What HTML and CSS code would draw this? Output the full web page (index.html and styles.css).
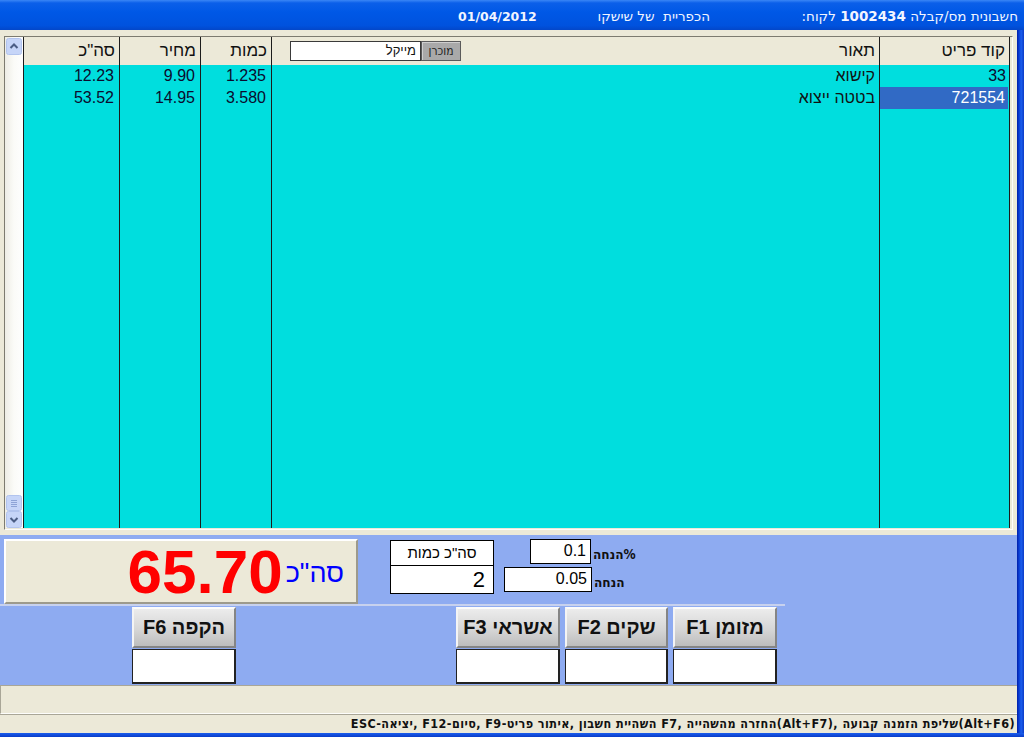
FILE: index.html
```html
<!DOCTYPE html>
<html lang="he">
<head>
<meta charset="utf-8">
<title>POS</title>
<link rel="stylesheet" href="styles.css">
</head>
<body>
<div class="app">
  <div class="titlebar">
    <span class="t-spacer"></span>
    <span class="t-date">01/04/2012</span>
    <span class="t-shop"><span dir="rtl">הכפריית&nbsp; של שישקו</span></span>
    <span class="t-doc"><span dir="rtl">חשבונית מס/קבלה <b>1002434</b> לקוח:</span></span>
  </div>
  <div class="frame">
    <div class="content">
      <div class="grid">
        <div class="scrollbar">
          <svg class="sb-btn" width="16" height="17" viewBox="0 0 16 17"><rect x="0.5" y="0.5" width="15" height="16" rx="2" fill="#c6d5f8" stroke="#b2c4ee"/><path d="M4.5 10 L8 6.5 L11.5 10" fill="none" stroke="#4b5d84" stroke-width="2"/></svg>
          <div class="sb-track"></div>
          <svg class="sb-btn" width="16" height="16" viewBox="0 0 16 16"><rect x="0.5" y="0.5" width="15" height="15" rx="2" fill="#c6d5f8" stroke="#b2c4ee"/><path d="M5 5.5 H11 M5 7.5 H11 M5 9.5 H11 M5 11.5 H11" stroke="#8ea3d6" stroke-width="1"/></svg>
          <svg class="sb-btn" width="16" height="17" viewBox="0 0 16 17"><rect x="0.5" y="0.5" width="15" height="16" rx="2" fill="#c6d5f8" stroke="#b2c4ee"/><path d="M4.5 7 L8 10.5 L11.5 7" fill="none" stroke="#4b5d84" stroke-width="2"/></svg>
        </div>
        <div class="col c1">
          <div class="hcell"><span dir="rtl">סה"כ</span></div>
          <div class="gbody">
            <div class="cell">12.23</div>
            <div class="cell">53.52</div>
          </div>
        </div>
        <div class="col c2">
          <div class="hcell"><span dir="rtl">מחיר</span></div>
          <div class="gbody">
            <div class="cell">9.90</div>
            <div class="cell">14.95</div>
          </div>
        </div>
        <div class="col c3">
          <div class="hcell"><span dir="rtl">כמות</span></div>
          <div class="gbody">
            <div class="cell">1.235</div>
            <div class="cell">3.580</div>
          </div>
        </div>
        <div class="col c4">
          <div class="hcell hcell-desc">
            <div class="seller">
              <span class="seller-input" dir="rtl">מייקל</span>
              <span class="seller-btn" dir="rtl">מוכרן</span>
            </div>
            <span dir="rtl">תאור</span>
          </div>
          <div class="gbody">
            <div class="cell heb"><span dir="rtl">קישוא</span></div>
            <div class="cell heb"><span dir="rtl">בטטה ייצוא</span></div>
          </div>
        </div>
        <div class="col c5">
          <div class="hcell"><span dir="rtl">קוד פריט</span></div>
          <div class="gbody">
            <div class="cell">33</div>
            <div class="cell selected">721554</div>
          </div>
        </div>
      </div>

      <div class="panel">
        <div class="toprow">
          <div class="totalbox">
            <span class="amount">65.70</span>
            <span class="amount-label" dir="rtl">סה"כ</span>
          </div>
          <div class="qty">
            <div class="qty-h" dir="rtl">סה"כ כמות</div>
            <div class="qty-v">2</div>
          </div>
          <div class="disc">
            <div class="drow drow1">
              <span class="dbox dbox1">0.1</span>
              <span class="dlabel" dir="rtl">%הנחה</span>
            </div>
            <div class="drow">
              <span class="dbox dbox2">0.05</span>
              <span class="dlabel" dir="rtl">הנחה</span>
            </div>
          </div>
        </div>
        <div class="sep"></div>
        <div class="btnrow">
          <div class="bcol b6">
            <div class="btn"><span dir="rtl">הקפה F6</span></div>
            <div class="bbox"></div>
          </div>
          <div class="bcol b3">
            <div class="btn"><span dir="rtl">אשראי F3</span></div>
            <div class="bbox"></div>
          </div>
          <div class="bcol b2">
            <div class="btn"><span dir="rtl">שקים F2</span></div>
            <div class="bbox"></div>
          </div>
          <div class="bcol b1">
            <div class="btn"><span dir="rtl">מזומן F1</span></div>
            <div class="bbox"></div>
          </div>
        </div>
      </div>

      <div class="status1"></div>
      <div class="status2" dir="rtl">(Alt+F6)שליפת הזמנה קבועה ,(Alt+F7)החזרה מהשהייה ,F7 השהיית חשבון ,איתור פריט-F9 ,סיום-F12 ,יציאה-ESC</div>
    </div>
    <div class="rframe"></div>
  </div>
  <div class="bframe"></div>
</div>
</body>
</html>
```

FILE: styles.css
```css
* {
  box-sizing: border-box;
  margin: 0;
  padding: 0;
}

html, body {
  width: 1024px;
  height: 737px;
  overflow: hidden;
}

body {
  background: #ece9d8;
  font-family: "Liberation Sans", Arial, sans-serif;
  color: #000;
}

.app {
  width: 1024px;
  height: 737px;
  display: flex;
  flex-direction: column;
}

/* Title bar */
.titlebar {
  height: 30px;
  flex: none;
  display: flex;
  align-items: center;
  padding-top: 2px;
  color: #f2f5ff;
  font-family: "DejaVu Sans", sans-serif;
  font-size: 13.5px;
  background: linear-gradient(#3a86f6 0, #0b5fe9 3px, #0058e6 40%, #0052de 85%, #0347c9 100%);
  white-space: nowrap;
}

.t-spacer {
  width: 458px;
  flex: none;
}

.t-date {
  width: 80px;
  flex: none;
  font-weight: bold;
  font-size: 12.5px;
}

.t-shop {
  width: 172px;
  flex: none;
  text-align: right;
}

.t-doc {
  flex: 1;
  text-align: right;
  margin-right: 6px;
}

.t-doc b {
  font-weight: bold;
}

/* Frame */
.frame {
  height: 703px;
  flex: none;
  display: flex;
}

.content {
  width: 1017px;
  flex: none;
  display: flex;
  flex-direction: column;
  padding-top: 6px;
  background: #ece9d8;
}

.rframe {
  flex: 1;
  background: linear-gradient(90deg, #001ea8 0, #0a3fd6 30%, #1a5ded 60%, #0b3cc7 100%);
}

.bframe {
  height: 4px;
  flex: none;
  background: linear-gradient(#1a5ded, #0a3cc8);
}

/* Grid */
.grid {
  margin-left: 4px;
  width: 1009px;
  height: 494px;
  flex: none;
  display: flex;
  border: 1px solid;
  border-color: #7d7b70 #fdfdfb #fdfdfb #7d7b70;
  padding-right: 2px;
  padding-bottom: 1px;
  background: #ece9d8;
}

.scrollbar {
  width: 18px;
  flex: none;
  display: flex;
  flex-direction: column;
  align-items: center;
  padding-top: 1px;
  background: linear-gradient(90deg, #eeede5, #fbfbf8 50%, #fefefe);
}

.sb-btn {
  display: block;
  flex: none;
}

.sb-track {
  flex: 1;
}

.col {
  display: flex;
  flex-direction: column;
  border-left: 1px solid #1c1c1c;
}

.c1 { width: 96px; }
.c2 { width: 81px; }
.c3 { width: 71px; }
.c4 { width: 608px; }
.c5 { width: 131px; border-right: 1px solid #1c1c1c; }

.hcell {
  height: 28px;
  flex: none;
  display: flex;
  align-items: center;
  justify-content: flex-end;
  padding-right: 4px;
  background: #ece9d8;
  font-size: 17px;
  color: #111;
  white-space: nowrap;
}

.hcell-desc {
  justify-content: space-between;
  padding-left: 18px;
}

.seller {
  display: flex;
  align-items: center;
}

.seller-input {
  width: 131px;
  height: 20px;
  background: #fff;
  border: 1px solid #3a3a3a;
  font-size: 13px;
  line-height: 18px;
  text-align: right;
  padding-right: 4px;
  color: #111;
}

.seller-btn {
  width: 40px;
  height: 20px;
  background: #a9a9a9;
  border: 1px solid #5a5a5a;
  box-shadow: inset 1px 1px 0 #cfcfcf;
  font-family: "DejaVu Sans Condensed", "DejaVu Sans", sans-serif;
  font-stretch: condensed;
  font-size: 12px;
  line-height: 18px;
  text-align: center;
  color: #222;
}

.gbody {
  flex: 1;
  background: #00dede;
}

.cell {
  height: 22px;
  line-height: 22px;
  text-align: right;
  padding-right: 5px;
  font-size: 16px;
  color: #0b0b2e;
  white-space: nowrap;
}

.cell.heb {
  padding-right: 4px;
  color: #111;
}

.c5 .cell {
  padding-right: 3px;
}

.cell.selected {
  background: #316ac5;
  color: #fff;
  margin-right: 1px;
}

/* Lower panel */
.panel {
  height: 150px;
  flex: none;
  margin-top: 5px;
  display: flex;
  flex-direction: column;
  padding-top: 4px;
  background: #8eabf1;
}

.toprow {
  height: 65px;
  flex: none;
  display: flex;
  align-items: flex-start;
}

.totalbox {
  margin-left: 4px;
  width: 354px;
  height: 65px;
  flex: none;
  display: flex;
  align-items: center;
  justify-content: flex-end;
  padding-right: 12px;
  background: #ece9d8;
  border: 2px solid;
  border-color: #ffffff #9d9a8c #9d9a8c #ffffff;
}

.amount {
  color: #ff0000;
  font-weight: bold;
  font-size: 62px;
  line-height: 62px;
}

.amount-label {
  color: #0000ff;
  font-size: 27px;
  margin-left: 3px;
  margin-top: 4px;
}

.qty {
  margin-left: 32px;
  margin-top: 1px;
  width: 104px;
  flex: none;
  background: #fff;
  border: 1px solid #000;
}

.qty-h {
  height: 25px;
  border-bottom: 1px solid #000;
  text-align: center;
  font-size: 15px;
  line-height: 24px;
}

.qty-v {
  height: 27px;
  text-align: right;
  padding-right: 8px;
  font-size: 22px;
  line-height: 27px;
}

.disc {
  margin-left: 10px;
  display: flex;
  flex-direction: column;
  gap: 3px;
}

.drow {
  display: flex;
  align-items: center;
}

.drow1 {
  padding-left: 26px;
}

.dbox {
  display: block;
  height: 25px;
  background: #fff;
  border: 1px solid #000;
  text-align: right;
  padding-right: 4px;
  font-size: 16px;
  line-height: 22px;
}

.dbox1 { width: 61px; }
.dbox2 { width: 88px; }

.dlabel {
  margin-left: 2px;
  margin-top: 4px;
  font-family: "DejaVu Sans Condensed", "DejaVu Sans", sans-serif;
  font-stretch: condensed;
  font-weight: bold;
  font-size: 13.5px;
  color: #111;
}

.sep {
  width: 785px;
  height: 2px;
  flex: none;
  background: #c7d1ee;
  margin-bottom: 1px;
}

.btnrow {
  display: flex;
  padding-left: 132px;
}

.bcol {
  width: 104px;
  flex: none;
  display: flex;
  flex-direction: column;
  gap: 1px;
}

.b3 { margin-left: 220px; }
.b2 { margin-left: 5px; width: 103px; }
.b1 { margin-left: 5px; }

.btn {
  height: 41px;
  display: flex;
  align-items: center;
  justify-content: center;
  font-weight: bold;
  font-size: 20px;
  color: #111;
  background: linear-gradient(#ececec, #d6d6d6 55%, #bdbdbd);
  border: 2px solid;
  border-color: #fbfbfb #858585 #858585 #f4f4f4;
  white-space: nowrap;
}

.bbox {
  height: 35px;
  background: #fff;
  border: 1px solid #222;
  border-right-width: 2px;
  border-bottom-width: 2px;
}

/* Status */
.status1 {
  height: 29px;
  flex: none;
  border-top: 1px solid #a9a697;
  border-left: 1px solid #a9a697;
  border-bottom: 1px solid #fdfdfb;
  background: #ece9d8;
}

.status2 {
  height: 19px;
  flex: none;
  border-top: 1px solid #a9a697;
  padding-right: 2px;
  font-family: "DejaVu Sans Condensed", "DejaVu Sans", sans-serif;
  font-stretch: condensed;
  font-weight: bold;
  font-size: 12.5px;
  letter-spacing: 0.42px;
  line-height: 17px;
  color: #111;
  white-space: nowrap;
  background: #ece9d8;
}
```
